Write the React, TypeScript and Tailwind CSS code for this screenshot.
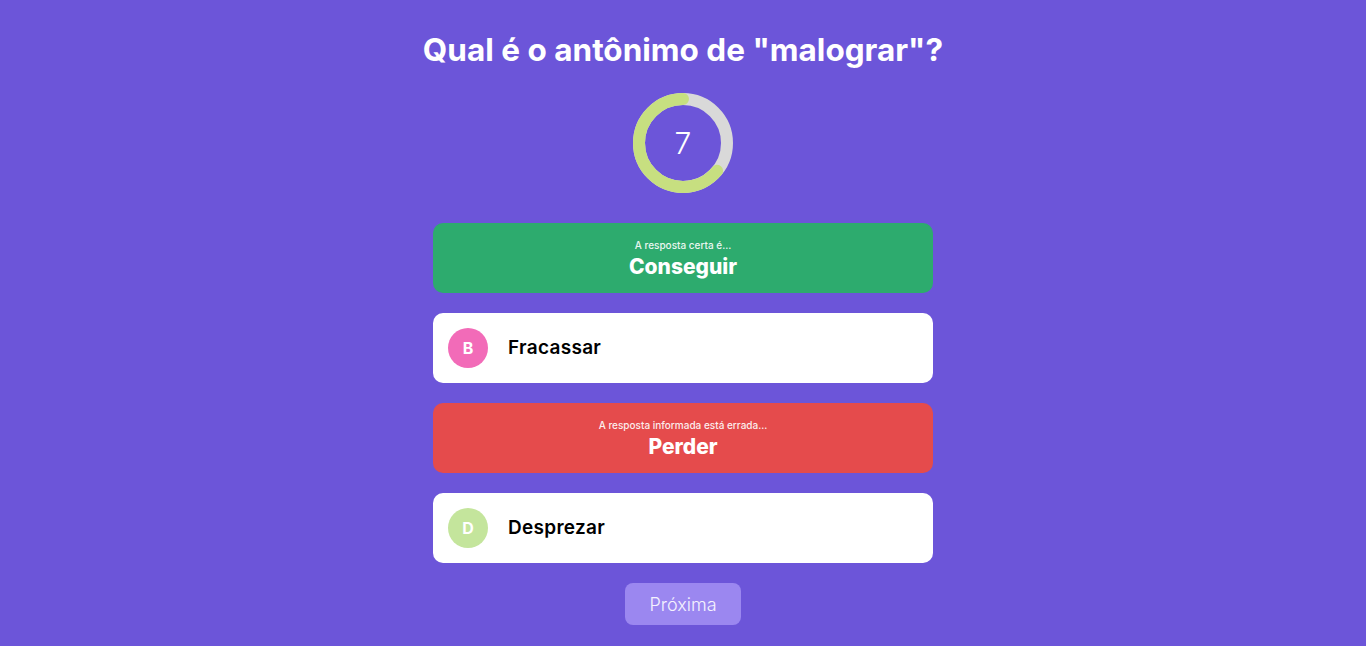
import React from "react";

const font = { fontFamily: "Inter, 'Noto Sans', sans-serif" };

type Option =
  | { kind: "correct"; label: string; text: string }
  | { kind: "wrong"; label: string; text: string }
  | { kind: "plain"; letter: string; text: string; badge: string };

const options: Option[] = [
  { kind: "correct", label: "A resposta certa é...", text: "Conseguir" },
  { kind: "plain", letter: "B", text: "Fracassar", badge: "bg-[#f26bb8]" },
  { kind: "wrong", label: "A resposta informada está errada...", text: "Perder" },
  { kind: "plain", letter: "D", text: "Desprezar", badge: "bg-[#c4e59c]" },
];

function Timer({ value, fraction }: { value: number; fraction: number }) {
  const r = 44;
  const c = 2 * Math.PI * r;
  return (
    <div className="relative w-[100px] h-[100px]">
      <svg width="100" height="100" viewBox="0 0 100 100">
        <circle cx="50" cy="50" r={r} fill="none" stroke="#d9d9d9" strokeWidth="12" />
        <circle
          cx="50"
          cy="50"
          r={r}
          fill="none"
          stroke="#c7df80"
          strokeWidth="12"
          strokeLinecap="round"
          strokeDasharray={`${c * fraction} ${c}`}
          transform="rotate(-90 50 50) scale(1 -1) translate(0 -100)"
        />
      </svg>
      <div className="absolute inset-0 flex items-center justify-center text-[30px] font-light text-white">
        {value}
      </div>
    </div>
  );
}

function Answer({ option }: { option: Option }) {
  if (option.kind === "plain") {
    return (
      <div className="flex items-center h-[70px] rounded-[10px] bg-white px-[15px]">
        <div
          className={`flex items-center justify-center w-10 h-10 rounded-full ${option.badge} text-white text-[16px] font-bold`}
        >
          {option.letter}
        </div>
        <span className="ml-5 text-[19px] font-semibold tracking-[0.3px] text-black">{option.text}</span>
      </div>
    );
  }
  const bg = option.kind === "correct" ? "bg-[#2dab6e]" : "bg-[#e54b4c]";
  return (
    <div className={`flex flex-col items-center justify-center h-[70px] rounded-[10px] ${bg} text-white`}>
      <span className="text-[10px] font-medium leading-none opacity-90">{option.label}</span>
      <span className="mt-[6px] text-[21px] font-extrabold leading-none">{option.text}</span>
    </div>
  );
}

export default function App() {
  return (
    <div style={font} className="min-h-screen bg-[#6c55d9] flex flex-col items-center pt-[29px]">
      <h1 className="text-[31.5px] font-bold text-white leading-[42px]">Qual é o antônimo de "malograr"?</h1>
      <div className="mt-[22px]">
        <Timer value={7} fraction={0.64} />
      </div>
      <div className="mt-[30px] w-[500px] flex flex-col gap-5">
        {options.map((o, i) => (
          <Answer key={i} option={o} />
        ))}
      </div>
      <button className="mt-5 w-[116px] h-[42px] rounded-[8px] bg-[#9b87f0] text-[18px] font-light text-white/90">
        Próxima
      </button>
    </div>
  );
}
